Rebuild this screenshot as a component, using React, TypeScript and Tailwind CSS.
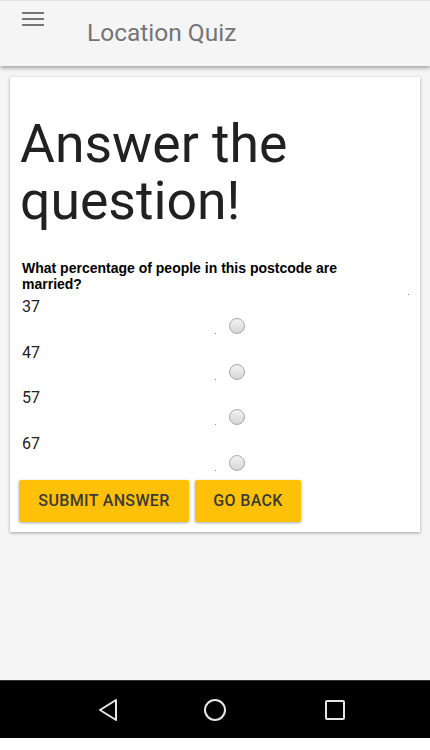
import React from "react";

const options = ["37", "47", "57", "67"];

function Radio() {
  return (
    <span className="block h-[16px] w-[16px] rounded-full border border-[#a8a8a8] bg-gradient-to-b from-[#f2f2f2] to-[#d6d6d6]" />
  );
}

export default function App() {
  return (
    <div className="flex h-[750px] w-[430px] flex-col bg-white font-['Roboto',sans-serif]">
      {/* Header */}
      <header className="relative z-10 flex h-[66px] shrink-0 border-t border-[#e2e2e2] bg-[#f5f5f5] shadow-[0_2px_4px_rgba(0,0,0,0.35)]">
        <div className="flex flex-col gap-[4px] pl-[22px] pt-[11px]">
          <span className="block h-[2px] w-[22px] bg-[#757575]" />
          <span className="block h-[2px] w-[22px] bg-[#757575]" />
          <span className="block h-[2px] w-[22px] bg-[#757575]" />
        </div>
        <h1 className="pl-[43px] pt-[18px] text-[24.5px] leading-[28px] text-[#757575]">
          Location Quiz
        </h1>
      </header>

      {/* Main */}
      <main className="flex-1 bg-[#f5f5f5] px-[10px] pt-[11px]">
        <section className="bg-white px-[10px] pb-[10px] pt-[38px] shadow-[0_1px_3px_rgba(0,0,0,0.35)]">
          <h2 className="text-[53.5px] leading-[57px] text-[#212121]">
            Answer the question!
          </h2>

          <p className="mt-[31px] w-[370px] pl-[2px] font-['Liberation_Sans',Arial,sans-serif] text-[14px] font-bold leading-[16px] text-black">
            What percentage of people in this postcode are married?
          </p>
          <div className="flex h-[5px] justify-end pr-[1px] pt-[2px]">
            <span className="block h-[1px] w-[1px] bg-[#888]" />
          </div>

          {options.map((o) => (
            <div key={o}>
              <div className="pl-[2px] text-[16px] leading-[20px] text-[#212121]">{o}</div>
              <div className="flex h-[25.5px] items-start pl-[195px] pt-[1px]">
                <span className="mr-[13px] mt-[15px] block h-[1px] w-[1px] bg-[#888]" />
                <Radio />
              </div>
            </div>
          ))}

          <div className="mt-[1px] flex gap-[6px]">
            <button className="-ml-px h-[42px] w-[170px] rounded-[2px] bg-[#ffc107] text-[16px] font-medium uppercase tracking-[0.35px] text-[#3a3a3a] shadow-[0_1px_3px_rgba(0,0,0,0.35)]">
              Submit Answer
            </button>
            <button className="h-[42px] w-[106px] rounded-[2px] bg-[#ffc107] text-[16px] font-medium uppercase tracking-[0.35px] text-[#3a3a3a] shadow-[0_1px_3px_rgba(0,0,0,0.35)]">
              Go Back
            </button>
          </div>
        </section>
      </main>

      {/* Android nav bar */}
      <nav className="flex h-[58px] shrink-0 items-center border-t border-[#333] bg-black">
        <div className="flex w-full items-center">
          <div className="flex w-[143px] justify-end pr-[24px]">
            <svg width="22" height="24" viewBox="0 0 22 24" fill="none">
              <path d="M19 2 L3 12 L19 22 Z" stroke="#e6e6e6" strokeWidth="2" strokeLinejoin="round" />
            </svg>
          </div>
          <div className="flex w-[144px] justify-center">
            <svg width="24" height="24" viewBox="0 0 24 24" fill="none">
              <circle cx="12" cy="12" r="10" stroke="#e6e6e6" strokeWidth="2" />
            </svg>
          </div>
          <div className="flex w-[143px] justify-start pl-[37px]">
            <svg width="22" height="22" viewBox="0 0 22 22" fill="none">
              <rect x="2" y="2" width="18" height="18" rx="1" stroke="#e6e6e6" strokeWidth="2" />
            </svg>
          </div>
        </div>
      </nav>
      <div className="h-[12px] shrink-0 bg-white" />
    </div>
  );
}
